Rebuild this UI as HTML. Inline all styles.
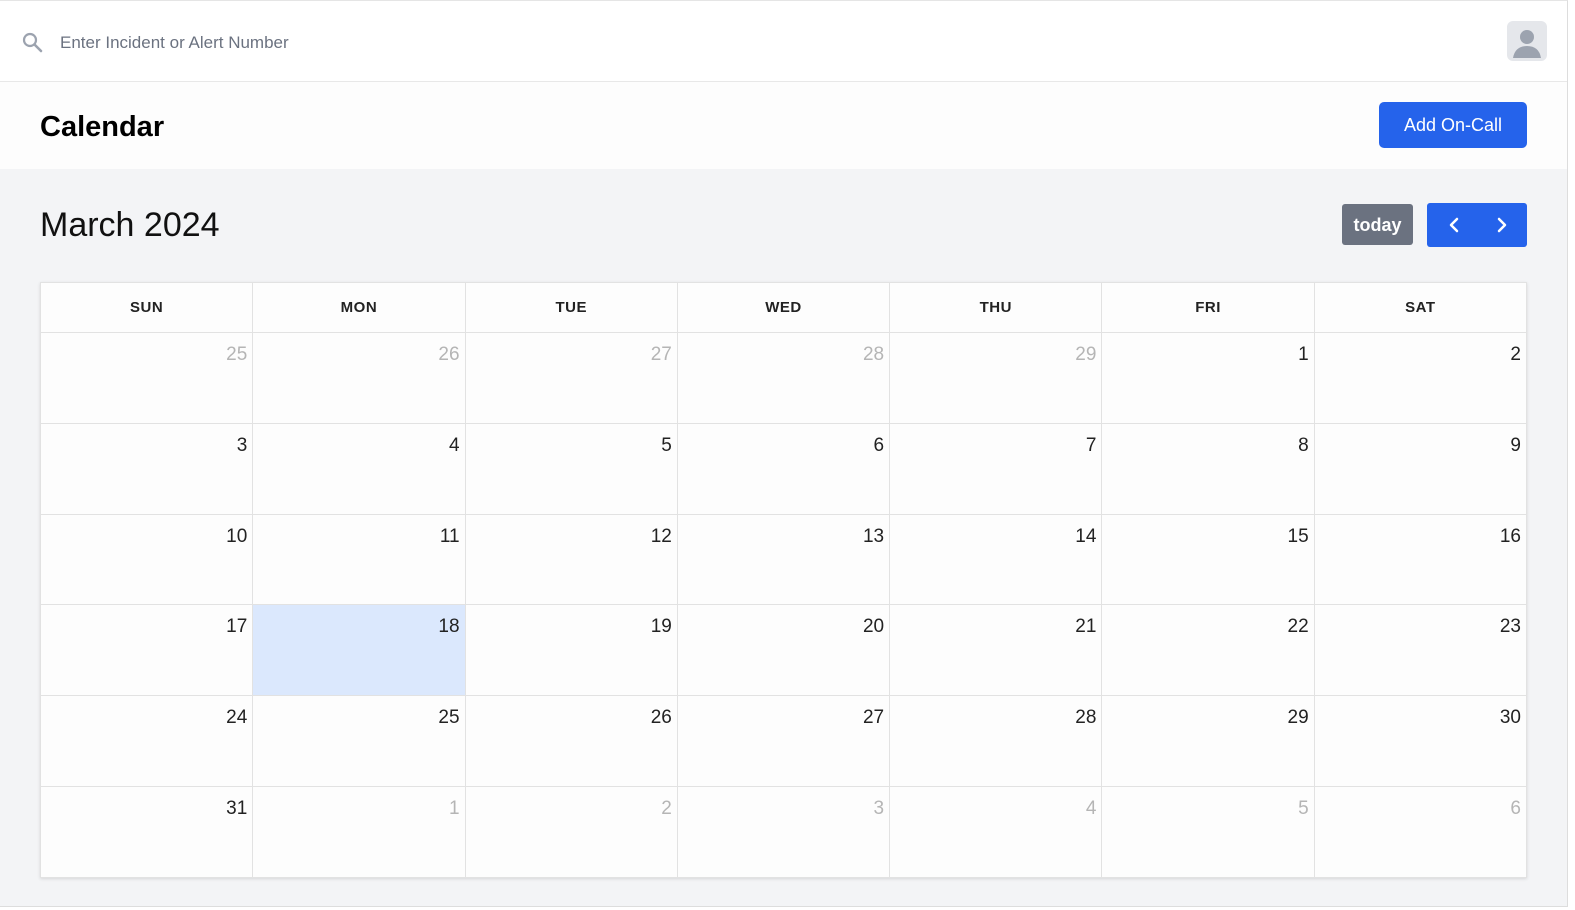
<!DOCTYPE html>
<html><head><style>
*{box-sizing:border-box;margin:0;padding:0}
body{width:1575px;height:910px;background:#fff;font-family:"Liberation Sans",sans-serif;position:relative;overflow:hidden}
.page{position:absolute;left:0;top:0;width:1568px;height:907px;background:#f3f4f6;border-right:1px solid #ddd;border-bottom:1px solid #ddd;border-top:1px solid #e5e5e5}
.top{position:absolute;left:0;top:0;width:100%;height:81px;background:#fff;border-bottom:1px solid #e8e8e8}
.ph{position:absolute;left:60px;top:32px;font-size:17px;color:#6b7280}
.avatar{position:absolute;left:1507px;top:20px;width:40px;height:40px;border-radius:6px;background:#e5e7eb}
.head{position:absolute;left:0;top:81px;width:100%;height:87px;background:#fdfdfd}
h1{position:absolute;left:40px;top:29px;font-size:29px;font-weight:bold;color:#000}
.add{position:absolute;left:1379px;top:20px;width:148px;height:46px;background:#2563eb;border-radius:5px;color:#fff;font-size:18px;text-align:center;line-height:46px}
.title{position:absolute;left:40px;top:205px;font-size:34px;color:#111}
.today{position:absolute;left:1342px;top:203px;width:71px;height:41px;background:#6b7280;border-radius:3px;color:#fff;font-size:18px;font-weight:bold;text-align:center;line-height:42px}
.nav{position:absolute;left:1427px;top:202px;width:100px;height:44px;background:#2563eb;border-radius:3px}
table{position:absolute;left:40px;top:281px;width:1487px;border-collapse:collapse;background:#fdfdfd;box-shadow:0 1px 3px rgba(0,0,0,.12)}
th,td{border:1px solid #e2e2e2;width:212.4px}
th{height:50px;font-size:15px;font-weight:bold;color:#222;letter-spacing:.5px}
td{height:90.8px;vertical-align:top;text-align:right;padding:11px 5px 0 0;font-size:19px;color:#222}
td.o{color:#b5b5b5}
td.t{background:#dbe8fd}
</style></head><body><div class="page">
<div class="top">
<svg style="position:absolute;left:22px;top:31px" width="21" height="21" viewBox="0 0 21 21"><circle cx="8" cy="8" r="6" fill="none" stroke="#9ca3af" stroke-width="2.2"/><line x1="12.5" y1="12.5" x2="19" y2="19" stroke="#9ca3af" stroke-width="2.6" stroke-linecap="round"/></svg>
<div class="ph">Enter Incident or Alert Number</div>
<div class="avatar"><svg width="40" height="40" viewBox="0 0 40 40"><circle cx="20" cy="16" r="7" fill="#9ca3af"/><path d="M6 37 Q8 25 20 25 Q32 25 34 37 Z" fill="#9ca3af"/></svg></div>
</div>
<div class="head"><h1>Calendar</h1><div class="add">Add On-Call</div></div>
<div class="title">March 2024</div>
<div class="today">today</div>
<div class="nav"><svg width="100" height="44" viewBox="0 0 100 44"><path d="M30 16 L24 22 L30 28" fill="none" stroke="#fff" stroke-width="2.5" stroke-linecap="round" stroke-linejoin="round"/><path d="M72 16 L78 22 L72 28" fill="none" stroke="#fff" stroke-width="2.5" stroke-linecap="round" stroke-linejoin="round"/></svg></div>
<table>
<tr><th>SUN</th><th>MON</th><th>TUE</th><th>WED</th><th>THU</th><th>FRI</th><th>SAT</th></tr>
<tr><td class="o">25</td><td class="o">26</td><td class="o">27</td><td class="o">28</td><td class="o">29</td><td>1</td><td>2</td></tr>
<tr><td>3</td><td>4</td><td>5</td><td>6</td><td>7</td><td>8</td><td>9</td></tr>
<tr><td>10</td><td>11</td><td>12</td><td>13</td><td>14</td><td>15</td><td>16</td></tr>
<tr><td>17</td><td class="t">18</td><td>19</td><td>20</td><td>21</td><td>22</td><td>23</td></tr>
<tr><td>24</td><td>25</td><td>26</td><td>27</td><td>28</td><td>29</td><td>30</td></tr>
<tr><td>31</td><td class="o">1</td><td class="o">2</td><td class="o">3</td><td class="o">4</td><td class="o">5</td><td class="o">6</td></tr>
</table>
</div></body></html>
